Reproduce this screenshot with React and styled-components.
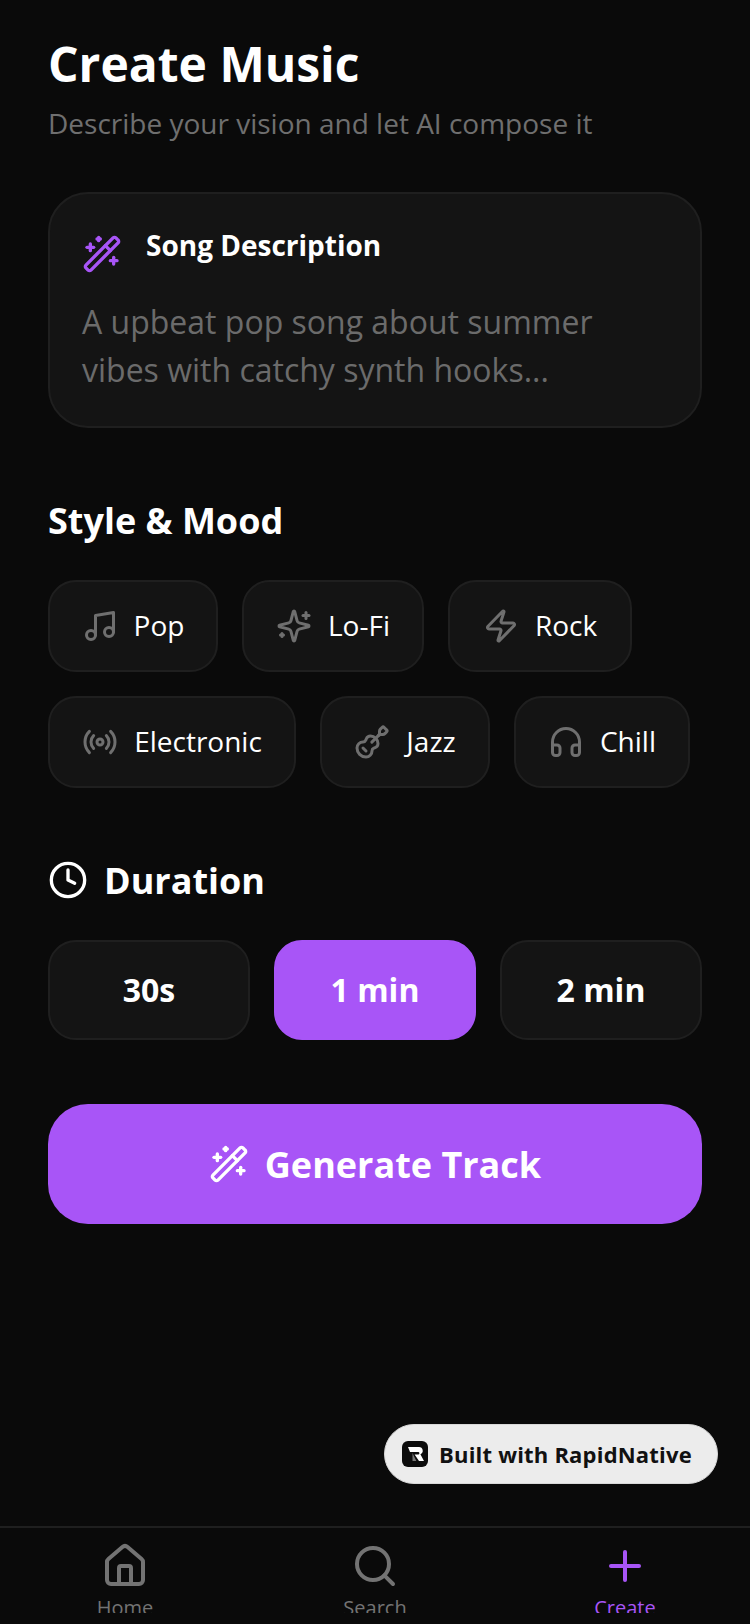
import React from "react";
import styled, { createGlobalStyle } from "styled-components";
import {
  Clock,
  Guitar,
  Headphones,
  House,
  Music,
  Plus,
  Radio,
  Search,
  WandSparkles,
  Zap,
} from "lucide-react";

const PURPLE = "#a855f7";

const GlobalStyle = createGlobalStyle`
  html, body { margin: 0; padding: 0; background: #0a0a0a; }
  * { box-sizing: border-box; }
  body { font-family: "Open Sans", "Noto Sans", sans-serif; }
`;

const Screen = styled.div`
  position: relative;
  width: 750px;
  height: 1624px;
  display: flex;
  flex-direction: column;
  background: #0a0a0a;
  overflow: hidden;
`;

const Main = styled.main`
  flex: 1;
  padding: 32px 48px 0;
`;

const Title = styled.h1`
  margin: 0;
  font-size: 48px;
  line-height: 64px;
  font-weight: 700;
  color: #fff;
`;

const Subtitle = styled.p`
  margin: 7px 0 0;
  font-size: 28px;
  line-height: 40px;
  color: #6f6f6f;
`;

const Card = styled.section`
  margin-top: 49px;
  height: 236px;
  padding: 32px;
  border: 2px solid #1f1f1f;
  border-radius: 40px;
  background: #141414;
`;

const CardHeader = styled.div`
  display: flex;
  align-items: flex-start;
  gap: 24px;
  color: ${PURPLE};
`;

const CardIcon = styled(WandSparkles)`
  margin-top: 8px;
  flex-shrink: 0;
`;

const CardLabel = styled.span`
  font-size: 28px;
  line-height: 38px;
  font-weight: 700;
  color: #fff;
`;

const Placeholder = styled.p`
  margin: 24px 0 0;
  font-size: 32px;
  line-height: 48px;
  color: #6b6b6b;
`;

const SectionTitle = styled.h2`
  display: flex;
  align-items: center;
  gap: 16px;
  margin: ${(p) => p.$top}px 0 0;
  font-size: 36px;
  line-height: 48px;
  font-weight: 700;
  color: #fff;
  svg { margin-top: -2px; }
`;

const Pills = styled.div`
  display: flex;
  flex-wrap: wrap;
  gap: 24px;
  margin-top: 35px;
`;

const Pill = styled.button`
  display: flex;
  align-items: center;
  justify-content: center;
  gap: 16px;
  width: ${(p) => p.$width}px;
  height: 92px;
  padding: 0;
  border: 2px solid #1f1f1f;
  border-radius: 28px;
  background: #141414;
  font: inherit;
  font-size: 28px;
  color: #fff;
  svg { color: #6f6f6f; flex-shrink: 0; }
  span { margin-top: -2px; }
`;

const Durations = styled.div`
  display: grid;
  grid-template-columns: repeat(3, 1fr);
  gap: 24px;
  margin-top: 35px;
`;

const DurationButton = styled.button`
  height: 100px;
  padding: 0 0 2px;
  border: 2px solid ${(p) => (p.$active ? PURPLE : "#1f1f1f")};
  border-radius: 28px;
  background: ${(p) => (p.$active ? PURPLE : "#141414")};
  font: inherit;
  font-size: 32px;
  font-weight: 700;
  color: #fff;
`;

const GenerateButton = styled.button`
  display: flex;
  align-items: center;
  justify-content: center;
  gap: 16px;
  width: 100%;
  height: 120px;
  margin-top: 64px;
  border: 0;
  border-radius: 40px;
  background: ${PURPLE};
  font: inherit;
  font-size: 36px;
  font-weight: 700;
  color: #fff;
`;

const Badge = styled.div`
  position: absolute;
  left: 384px;
  top: 1424px;
  display: flex;
  align-items: center;
  gap: 11px;
  width: 334px;
  height: 60px;
  padding: 0 17px;
  border: 1px solid #d8d8d8;
  border-radius: 30px;
  background: #ececec;
  font-size: 22px;
  letter-spacing: 0.2px;
  font-weight: 700;
  white-space: nowrap;
  color: #111;
  svg { flex-shrink: 0; }
  span { margin-top: -1px; }
`;

const TabBar = styled.nav`
  display: grid;
  grid-template-columns: repeat(3, 1fr);
  height: 98px;
  border-top: 2px solid #1f1f1f;
  background: #0a0a0a;
`;

const Tab = styled.div`
  display: flex;
  flex-direction: column;
  align-items: center;
  height: 85px;
  padding-top: 14px;
  overflow: hidden;
  color: ${(p) => (p.$active ? PURPLE : "#737373")};
  svg { flex-shrink: 0; }
`;

const TabLabel = styled.span`
  margin-top: 4px;
  font-size: 20px;
  line-height: 28px;
  flex-shrink: 0;
`;

function BadgeLogo() {
  return (
    <svg width="26" height="26" viewBox="0 0 26 26">
      <rect width="26" height="26" rx="6" fill="#0c0c0c" />
      <path d="M6 6h11a3.8 3.8 0 0 1 1.4 7.3L22 20h-5l-4.4-6.6h3.6a1.2 1.2 0 0 0 0-2.4H8z" fill="#fff" />
      <path d="M10.5 12l3.8 8H10.5z" fill="#777" />
    </svg>
  );
}

// the star with a small plus at each corner, lucide's Sparkles changed shape since
function LoFiSparkles({ size, strokeWidth }) {
  return (
    <svg
      width={size}
      height={size}
      viewBox="0 0 24 24"
      fill="none"
      stroke="currentColor"
      strokeWidth={strokeWidth}
      strokeLinecap="round"
      strokeLinejoin="round"
    >
      <path d="M9.937 15.5A2 2 0 0 0 8.5 14.063l-6.135-1.582a.5.5 0 0 1 0-.962L8.5 9.936A2 2 0 0 0 9.937 8.5l1.582-6.135a.5.5 0 0 1 .963 0L14.063 8.5A2 2 0 0 0 15.5 9.937l6.135 1.581a.5.5 0 0 1 0 .964L15.5 14.063a2 2 0 0 0-1.437 1.437l-1.582 6.135a.5.5 0 0 1-.963 0z" />
      <path d="M20 3v4" />
      <path d="M22 5h-4" />
      <path d="M4 17v2" />
      <path d="M5 18H3" />
    </svg>
  );
}

const STYLES = [
  { label: "Pop", icon: Music, width: 170 },
  { label: "Lo-Fi", icon: LoFiSparkles, width: 182 },
  { label: "Rock", icon: Zap, width: 184 },
  { label: "Electronic", icon: Radio, width: 248 },
  { label: "Jazz", icon: Guitar, width: 170 },
  { label: "Chill", icon: Headphones, width: 176 },
];

const DURATIONS = ["30s", "1 min", "2 min"];

const TABS = [
  { label: "Home", icon: House },
  { label: "Search", icon: Search },
  { label: "Create", icon: Plus, active: true },
];

export default function App() {
  return (
    <Screen>
      <GlobalStyle />
      <Main>
        <Title>Create Music</Title>
        <Subtitle>Describe your vision and let AI compose it</Subtitle>

        <Card>
          <CardHeader>
            <CardIcon size={40} strokeWidth={2} />
            <CardLabel>Song Description</CardLabel>
          </CardHeader>
          <Placeholder>
            A upbeat pop song about summer
            <br />
            vibes with catchy synth hooks...
          </Placeholder>
        </Card>

        <SectionTitle $top={69}>Style &amp; Mood</SectionTitle>
        <Pills>
          {STYLES.map(({ label, icon: Icon, width }) => (
            <Pill key={label} $width={width}>
              <Icon size={36} strokeWidth={2} />
              <span>{label}</span>
            </Pill>
          ))}
        </Pills>

        <SectionTitle $top={69}>
          <Clock size={40} strokeWidth={2} />
          Duration
        </SectionTitle>
        <Durations>
          {DURATIONS.map((d) => (
            <DurationButton key={d} $active={d === "1 min"}>
              {d}
            </DurationButton>
          ))}
        </Durations>

        <GenerateButton>
          <WandSparkles size={40} strokeWidth={2} />
          Generate Track
        </GenerateButton>
      </Main>

      <Badge>
        <BadgeLogo />
        <span>Built with RapidNative</span>
      </Badge>

      <TabBar>
        {TABS.map(({ label, icon: Icon, active }) => (
          <Tab key={label} $active={active}>
            <Icon size={48} strokeWidth={2} />
            <TabLabel>{label}</TabLabel>
          </Tab>
        ))}
      </TabBar>
    </Screen>
  );
}
